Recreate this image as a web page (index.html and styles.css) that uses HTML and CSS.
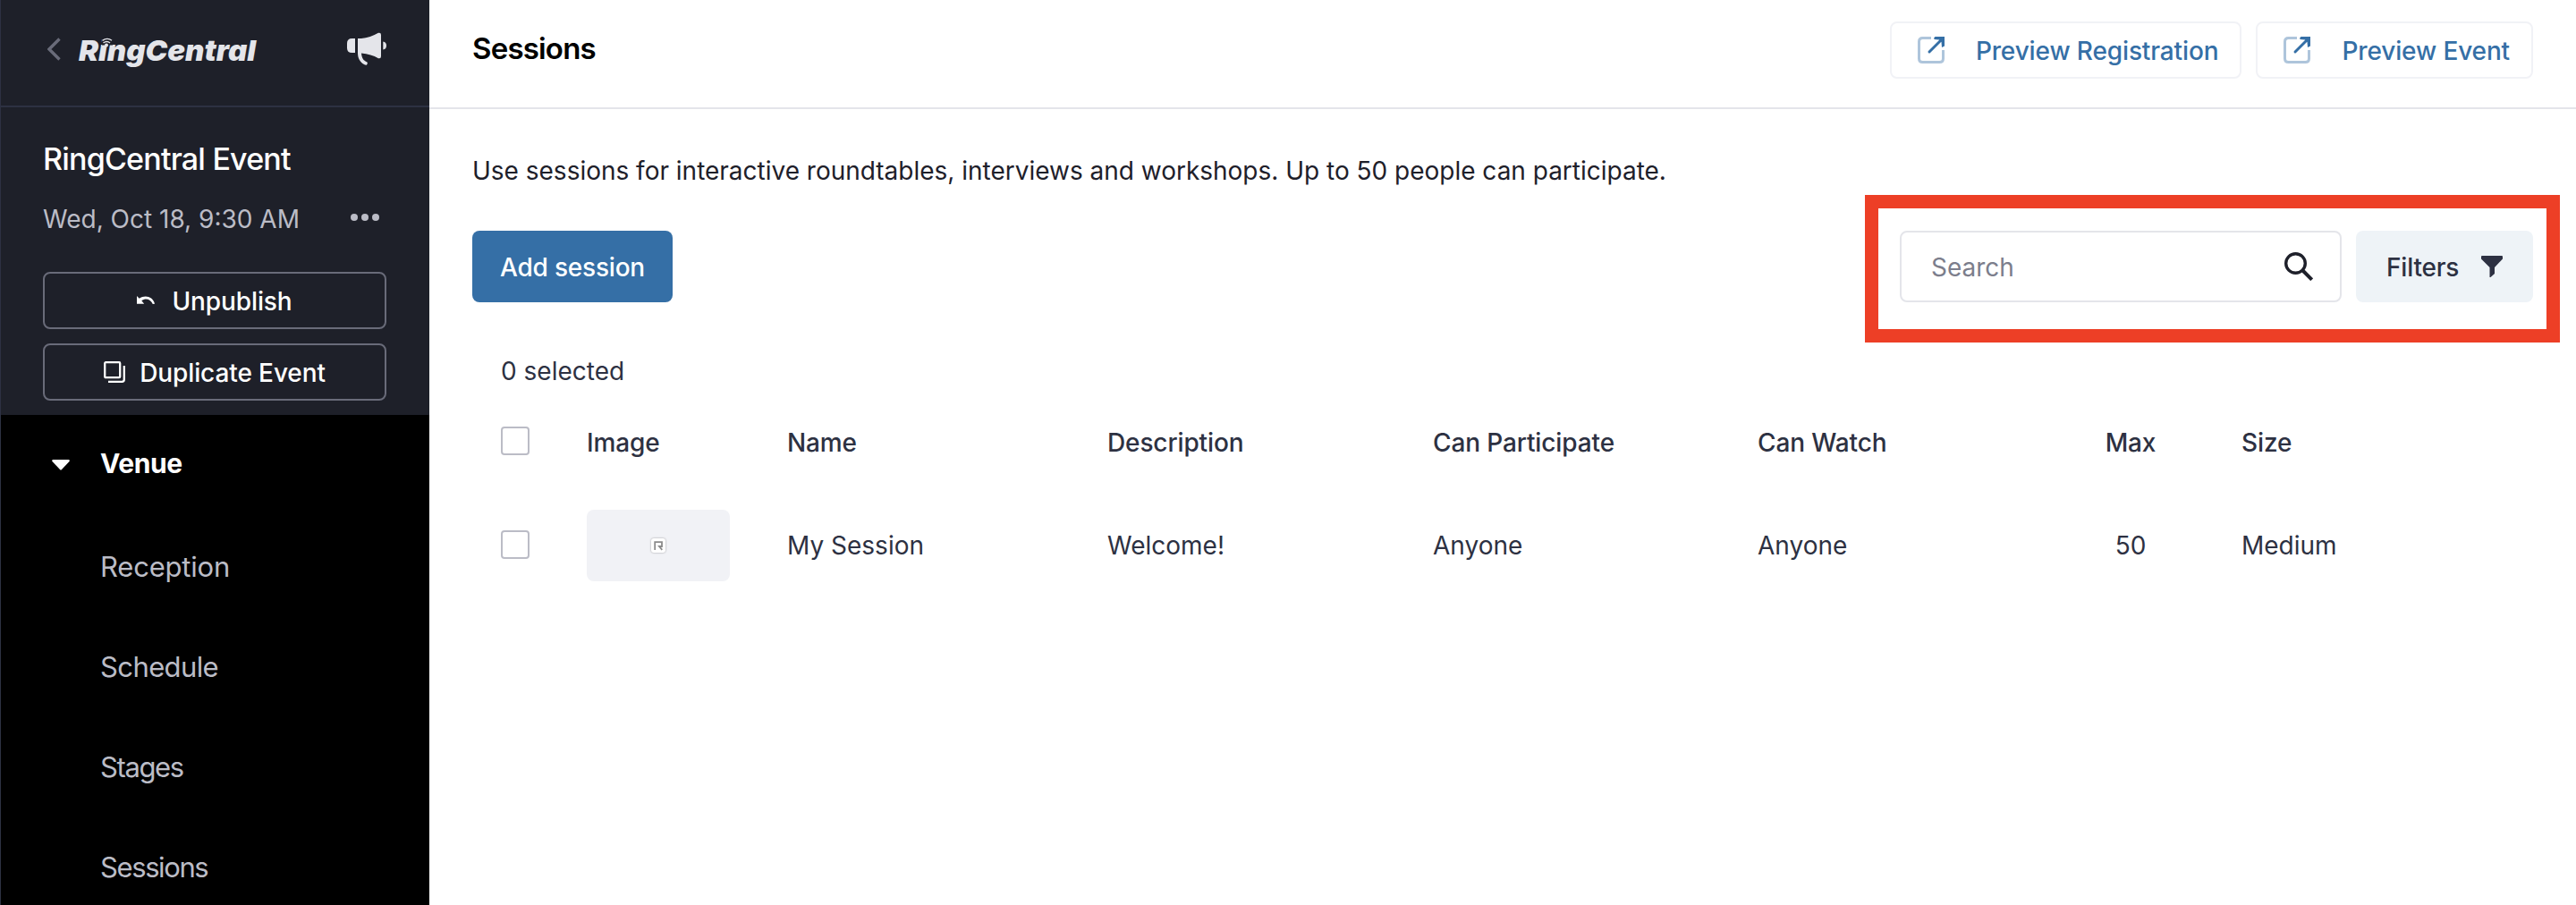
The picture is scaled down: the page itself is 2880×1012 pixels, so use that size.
FILE: index.html
```
<!DOCTYPE html>
<html lang="en">
<head>
<meta charset="utf-8">
<title>Sessions</title>
<link rel="stylesheet" href="styles.css">
</head>
<body>
<div class="wrap">
	<aside class="sidebar">
		<div class="side_top">
			<svg class="back" width="16" height="26" viewBox="0 0 16 26"><path d="M13.500 1.500 L2 13 L13.500 24.500" fill="none" stroke="#696b79" stroke-width="3.400"/></svg>
			<div class="logo">
				<svg width="204" height="50" viewBox="0 0 204 50">
					<text x="1" y="32" textLength="198" lengthAdjust="spacingAndGlyphs">RingCentral</text>
					<!-- signal mark instead of the i dot -->
					<rect x="27" y="3" width="12" height="11.500"/>
					<circle cx="32" cy="14.500" r="2"/>
					<path d="M28.500 12 Q32.500 9 36 12 M27.500 9.300 Q33 5.500 38 9.300"/>
				</svg>
			</div>
			<svg class="horn" width="44" height="38" viewBox="0 0 44 38">
				<path d="M9 7 V23 H5.500 Q0 23 0 17.500 V12.500 Q0 7 5.500 7 Z"/>
				<path d="M12 7 H16 Q26 6 35 .8 Q38 0 38 3 V27 Q38 30 35 29.200 Q27 24.500 16 23.500 C16.500 29 18 31.500 22.500 33.500 Q23.500 35 22 36.500 Q21 37 19.500 36.300 C14.500 33.500 12 29.500 12 23 Z"/>
				<path d="M40.300 10.500 Q44 11 44 15 Q44 19 40.300 19.500 Z"/>
			</svg>
		</div>
		<div class="side_event">
			<h2>RingCentral Event</h2>
			<div class="date_row">
				<span class="date">Wed, Oct 18, 9:30 AM</span>
				<svg width="32" height="8" viewBox="0 0 32 8"><circle cx="4" cy="4" r="4"/><circle cx="16" cy="4" r="4"/><circle cx="28" cy="4" r="4"/></svg>
			</div>
			<button class="side_btn">
				<svg class="undo" width="20" height="10" viewBox="0 0 20 10"><path d="M0 0 L2.700 2.800 C9 -1.800 18 .5 20 8.700 L17.800 9 C15.500 3.200 9.500 1.800 5.300 5.300 L8.200 8.700 H0 Z" fill="#fff"/></svg>
				<span>Unpublish</span>
			</button>
			<button class="side_btn">
				<svg class="dup" width="24" height="24" viewBox="0 0 24 24"><rect x="1.200" y="1.200" width="17" height="17" rx="1" fill="none" stroke="#fff" stroke-width="2.300"/><path d="M5 22.800 H20.500 Q22.800 22.800 22.800 20.500 V5" fill="none" stroke="#fff" stroke-width="2.300"/></svg>
				<span>Duplicate Event</span>
			</button>
		</div>
		<nav class="side_nav">
			<div class="nav_title">
				<svg width="20" height="12" viewBox="0 0 20 12"><path d="M1.200 0 H18.800 Q20.500 .6 19.500 2 L11 11 Q10 12 9 11 L.5 2 Q-.5 .6 1.200 0 Z" fill="#fff"/></svg>
				<span>Venue</span>
			</div>
			<ul>
				<li class="reception"><a href="#">Reception</a></li>
				<li class="schedule"><a href="#">Schedule</a></li>
				<li class="stages"><a href="#">Stages</a></li>
				<li class="sessions"><a href="#">Sessions</a></li>
			</ul>
		</nav>
	</aside>
	<main class="main">
		<header class="header">
			<h1>Sessions</h1>
			<div class="previews">
				<a class="preview" href="#">
					<svg width="30" height="30" viewBox="0 0 30 30" fill="none" stroke-width="3"><path d="M15 1.500 H5.500 Q1.500 1.500 1.500 5.500 V24.500 Q1.500 28.500 5.500 28.500 H24.500 Q28.500 28.500 28.500 24.500 V15" stroke="#aec5db"/><path d="M13 17 L26 4" stroke="#356fa6" stroke-linecap="round"/><path d="M19.500 0 H30 V10.500 L27 12 L26.500 6 L24 3.500 L18.500 3 Q17.500 1 19.500 0 Z" fill="#356fa6"/></svg>
					<span>Preview Registration</span>
				</a>
				<a class="preview" href="#">
					<svg width="30" height="30" viewBox="0 0 30 30" fill="none" stroke-width="3"><path d="M15 1.500 H5.500 Q1.500 1.500 1.500 5.500 V24.500 Q1.500 28.500 5.500 28.500 H24.500 Q28.500 28.500 28.500 24.500 V15" stroke="#aec5db"/><path d="M13 17 L26 4" stroke="#356fa6" stroke-linecap="round"/><path d="M19.500 0 H30 V10.500 L27 12 L26.500 6 L24 3.500 L18.500 3 Q17.500 1 19.500 0 Z" fill="#356fa6"/></svg>
					<span>Preview Event</span>
				</a>
			</div>
		</header>
		<section class="content">
			<p class="intro">Use sessions for interactive roundtables, interviews and workshops. Up to 50 people can participate.</p>
			<div class="toolbar">
				<button class="add">Add session</button>
				<div class="filter_box">
					<div class="search">
						<span>Search</span>
						<svg width="32" height="32" viewBox="0 0 32 32" fill="none" stroke="#1e202a" stroke-width="3.400"><circle cx="12.500" cy="12.500" r="10.800"/><path d="M20 20 L30.700 30.700" stroke-width="4"/></svg>
					</div>
					<button class="filters">
						<span>Filters</span>
						<svg width="24" height="24" viewBox="0 0 24 24"><path d="M1 0 H23 Q24 0 24 1 V3.500 L15 13 V20 L10.500 24 H9.500 V13 L0 3.500 V1 Q0 0 1 0 Z" fill="#2d3142"/></svg>
					</button>
				</div>
			</div>
			<p class="selected">0 selected</p>
			<div class="row row_head">
				<div><i class="check"></i></div>
				<div>Image</div>
				<div>Name</div>
				<div>Description</div>
				<div>Can Participate</div>
				<div>Can Watch</div>
				<div class="max">Max</div>
				<div>Size</div>
			</div>
			<div class="row row_body">
				<div><i class="check"></i></div>
				<div class="thumb">
					<svg width="16" height="16" viewBox="0 0 16 16"><rect width="16" height="16" rx="3" fill="#fff"/><path d="M4.200 13 V4.200 H12 V9 H9 L12.300 12.800" fill="none" stroke="#8b8b8b" stroke-width="1.800"/></svg>
				</div>
				<div>My Session</div>
				<div>Welcome!</div>
				<div>Anyone</div>
				<div>Anyone</div>
				<div class="max">50</div>
				<div>Medium</div>
			</div>
		</section>
	</main>
</div>
</body>
</html>
```
FILE: styles.css
```
* {margin:0; padding:0; box-sizing:border-box}
li {list-style:none}
a {text-decoration:none; color:inherit}
button {border:0; font:inherit; color:inherit}
svg {display:block; flex:none}
body {
	font-family:Inter, "Liberation Sans", sans-serif;
	font-size:28px;
	color:#2d3142;
	background-color:#fff;
	overflow:hidden;
}

.wrap {display:flex; height:1012px}

/* sidebar */
.sidebar {
	width:480px;
	flex:none;
	background-color:#000;
	border-left:1px solid #2d3142;
	overflow:hidden;
	white-space:nowrap;
}
.side_top {
	display:flex;
	align-items:flex-start;
	height:120px;
	padding:36px 48px 0 52px;
	background-color:#1e2029;
	border-bottom:2px solid #2d3142;
}
.back {margin-top:6px}
.logo {margin-left:18px}
.logo svg {overflow:visible}
.logo text {
	font-size:32px;
	font-weight:900;
	font-style:italic;
	fill:#e4e5ea;
}
.logo rect {fill:#1e2029}
.logo circle {fill:#e4e5ea}
.logo path {fill:none; stroke:#e4e5ea; stroke-width:1.4px}
.horn {margin-left:auto; fill:#e4e5ea}
.side_event {
	height:344px;
	padding:36px 48px 0 47px;
	background-color:#1e2029;
}
.side_event h2 {
	color:#fff;
	font-size:34px;
	font-weight:500;
	line-height:44px;
	letter-spacing:-.8px;
}
.date_row {
	display:flex;
	align-items:center;
	justify-content:space-between;
	height:36px;
	margin-top:26px;
	margin-bottom:42px;
	padding-right:8px;
}
.date {padding-top:1px; color:#bbbcc6}
.date_row svg {margin-top:-2px; fill:#bbbcc6}
.side_btn {
	display:flex;
	align-items:center;
	justify-content:center;
	width:384px;
	height:64px;
	margin-bottom:16px;
	border:2px solid #696b79;
	border-radius:8px;
	background-color:transparent;
	color:#fff;
	font-weight:550;
	letter-spacing:-.1px;
}
.side_btn span {padding-top:2px}
.undo {margin-right:19px}
.dup {margin-right:16px}
.side_nav {padding-top:34px}
.nav_title {
	display:flex;
	align-items:center;
	height:40px;
	padding-left:57px;
	color:#fff;
	font-size:30px;
	font-weight:700;
	letter-spacing:-.4px;
}
.nav_title svg {margin-top:3px}
.nav_title span {margin-left:34px}
.side_nav ul {margin-top:40px}
.side_nav li {
	height:112px;
	padding-left:111px;
	line-height:112px;
	color:#bbbcc6;
	font-size:31px;
}
.reception {letter-spacing:-.2px}
.schedule {letter-spacing:-.6px}
.stages {letter-spacing:-1.4px}
.sessions {letter-spacing:-1.4px}

/* main */
.main {flex:1; min-width:0}
.header {
	display:flex;
	justify-content:space-between;
	height:122px;
	padding:24px 48px 0;
	border-bottom:2px solid #e4e5ea;
}
.header h1 {
	color:#000;
	font-size:33px;
	font-weight:600;
	line-height:60px;
	letter-spacing:-.8px;
}
.previews {display:flex; gap:16px}
.preview {
	display:flex;
	align-items:center;
	height:64px;
	padding:0 24px 0 29px;
	border:2px solid #f1f2f6;
	border-radius:8px;
	color:#356fa6;
	font-weight:550;
	letter-spacing:-.13px;
}
.preview span {margin-left:35px; padding-top:2px}
.content {padding:50px 48px 0}
.intro {
	color:#1e202a;
	line-height:38px;
	letter-spacing:-.01px;
}
.toolbar {
	display:flex;
	justify-content:space-between;
	align-items:flex-start;
	margin-top:48px;
}
.add {
	width:224px;
	height:80px;
	padding-top:2px;
	border-radius:8px;
	background-color:#356fa6;
	color:#fff;
	font-weight:550;
	letter-spacing:-.2px;
}
.filter_box {
	display:flex;
	gap:16px;
	margin:-40px -30px 0 0;
	padding:25px 15px 30px 24px;
	border:15px solid #ed3f26;
}
.search {
	display:flex;
	align-items:center;
	justify-content:space-between;
	width:494px;
	height:80px;
	padding:0 30px 0 33px;
	border:2px solid #e4e5ea;
	border-radius:8px;
	color:#7c7e8c;
}
.search span {padding-top:2px}
.filters {
	display:flex;
	align-items:center;
	width:198px;
	height:80px;
	padding-left:34px;
	border-radius:8px;
	background-color:#eef3f7;
	font-weight:550;
}
.filters span {width:106px; padding-top:2px; text-align:left; letter-spacing:-.2px}
.selected {
	margin-top:14px;
	padding-left:32px;
	line-height:36px;
}
.row {
	display:grid;
	grid-template-columns:96px 224px 358px 364px 363px 355px 186px 1fr;
	align-items:center;
	padding-left:32px;
}
.row_head {
	margin-top:24px;
	height:76px;
	font-weight:550;
	letter-spacing:-.12px;
}
.row_body {height:80px; margin-top:37px}
.check {
	display:block;
	width:32px;
	height:32px;
	margin-top:-4px;
	border:2px solid #bbbcc6;
	border-radius:4px;
}
.row_body .check {margin-top:-3px}
.thumb {
	display:flex;
	align-items:center;
	justify-content:center;
	width:160px;
	height:80px;
	border-radius:8px;
	background-color:#f1f2f6;
}
.thumb svg {filter:drop-shadow(0 0 1px rgba(0,0,0,.35))}
.max {width:124px; text-align:center}
```
